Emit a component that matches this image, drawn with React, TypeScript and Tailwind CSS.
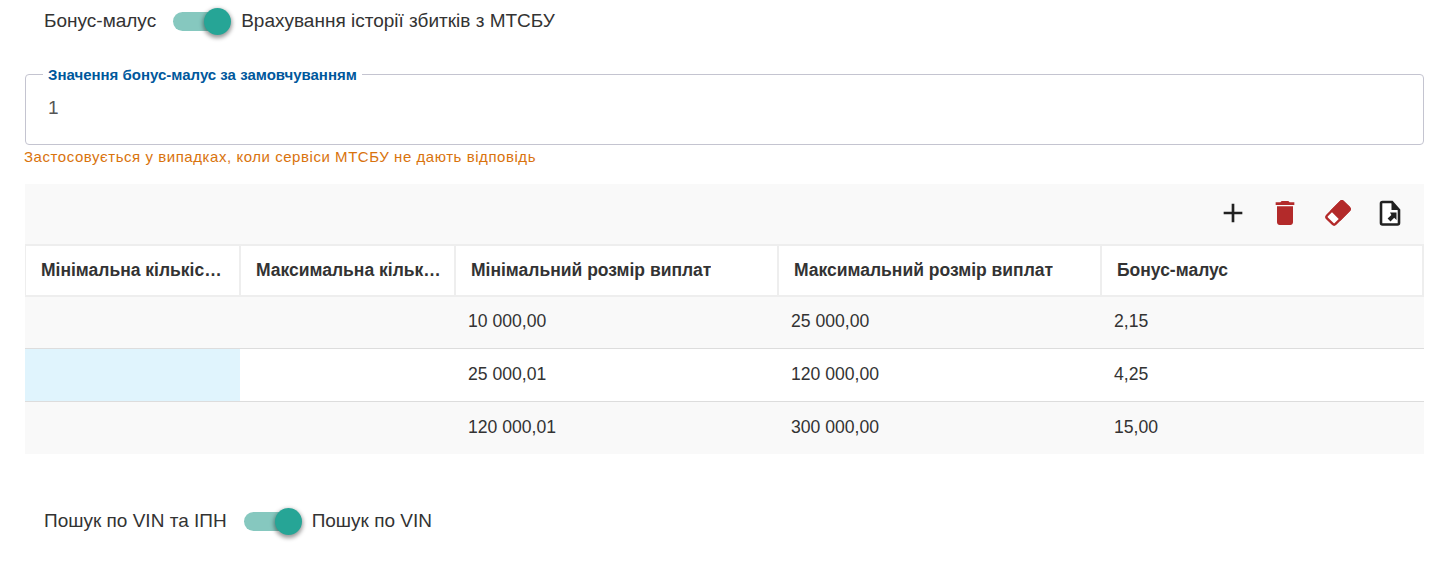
const columns = [
  'Мінімальна кількість страхових випадків',
  'Максимальна кількість страхових випадків',
  'Мінімальний розмір виплат',
  'Максимальний розмір виплат',
  'Бонус-малус',
];

const rows = [
  { min: '10 000,00', max: '25 000,00', bonus: '2,15' },
  { min: '25 000,01', max: '120 000,00', bonus: '4,25' },
  { min: '120 000,01', max: '300 000,00', bonus: '15,00' },
];

const gridCols = 'grid grid-cols-[215px_215px_323px_323px_323px]';

function Toggle() {
  return (
    <span className="relative mr-[10px] ml-[17px] block h-[27px] w-[58px] shrink-0">
      <span className="absolute top-[4px] left-0 h-[19px] w-[46px] rounded-full bg-[#86c8bf]" />
      <span className="absolute top-0 right-0 h-[27px] w-[27px] rounded-full bg-[#26a596] shadow-[0_2px_4px_1px_rgba(0,0,0,0.4)]" />
    </span>
  );
}

function SwitchRow({ left, right, className }: { left: string; right: string; className: string }) {
  return (
    <div className={`flex items-center pl-[19px] text-[19px] leading-none text-[#333] ${className}`}>
      <span className="-mt-[2px]">{left}</span>
      <Toggle />
      <span className="-mt-[2px]">{right}</span>
    </div>
  );
}

export default function App() {
  return (
    <div className="h-[566px] overflow-hidden bg-white pt-[6px] pl-[25px] font-['Liberation_Sans',Arial,sans-serif]">
      <SwitchRow left="Бонус-малус" right="Врахування історії збитків з МТСБУ" className="h-[30px]" />

      {/* default value */}
      <fieldset className="mt-[31px] h-[78px] w-[1399px] rounded border border-[#c4c4d0] pl-[17px]">
        <legend className="px-[5px] text-[15px] leading-[15px] font-bold text-[#00589c]">
          Значення бонус-малус за замовчуванням
        </legend>
        <div className="pt-[16px] pl-[5px] text-[19px] leading-5 text-[#555]">1</div>
      </fieldset>
      <p className="mt-[4px] -ml-px text-[15px] leading-4 tracking-[0.55px] text-[#d9730d]">
        Застосовується у випадках, коли сервіси МТСБУ не дають відповідь
      </p>

      {/* table */}
      <div className="mt-[19px] w-[1399px]">
        <div className="flex h-[60px] items-center justify-end gap-[20px] bg-[#f9f9f9] pr-[19px] pb-[3px]">
          <svg viewBox="0 0 24 24" className="h-8 w-8 fill-[#212121]">
            <path d="M19 13h-6v6h-2v-6H5v-2h6V5h2v6h6v2z" />
          </svg>
          <svg viewBox="0 0 24 24" className="h-8 w-8 fill-[#b32a2a]">
            <path d="M6 19c0 1.1.9 2 2 2h8c1.1 0 2-.9 2-2V7H6v12zM19 4h-3.500l-1-1h-5l-1 1H5v2h14V4z" />
          </svg>
          {/* eraser */}
          <svg viewBox="0 0 32 32" className="h-8 w-8">
            <g transform="rotate(-45 17 16)">
              <rect x="5.500" y="10" width="23" height="12" rx="2" fill="#fff" stroke="#b32a2a" strokeWidth="2.400" />
              <path d="M14.500 10h12a2 2 0 0 1 2 2v8a2 2 0 0 1-2 2h-12z" fill="#b32a2a" stroke="#b32a2a" strokeWidth="2.400" />
            </g>
          </svg>
          {/* export */}
          <svg viewBox="0 0 32 32" className="h-8 w-8">
            <path d="M9.500 5H19l7 8V26a1.500 1.500 0 0 1-1.500 1.500H9.500A1.500 1.500 0 0 1 8 26V6.500A1.500 1.500 0 0 1 9.500 5z" fill="#fff" stroke="#212121" strokeWidth="2.600" />
            <path d="M18.500 5l7.500 8h-7.500z" fill="#212121" />
            <path d="M17 15.500h6.500V23l-2.300-2.300-3.700 3.800-2.900-2.900 3.800-3.700z" fill="#212121" />
          </svg>
        </div>

        <div className="grid h-[53px] grid-cols-[216px_215px_323px_323px_322px] border-y-2 border-[#eee] text-[17.5px] font-bold text-[#333]">
          {columns.map((name, i) => (
            <div
              key={name}
              className={`flex items-center border-r-2 border-[#eee] pr-[12px] pl-[15px] ${i === 0 ? 'border-l' : ''} ${i === 4 ? 'border-r' : ''}`}
            >
              <span className="truncate">{name}</span>
            </div>
          ))}
        </div>

        {rows.map((row, i) => (
          <div
            key={row.min}
            className={`${gridCols} ${i === 1 ? 'h-[53px]' : 'h-[52px]'} pb-[2px] text-[17.6px] text-[#333] ${i % 2 === 0 ? 'bg-[#f9f9f9]' : 'bg-white'} ${i < 2 ? 'border-b border-[#ddd]' : ''}`}
          >
            <div className={i === 1 ? '-mb-[2px] bg-[#e0f4fd]' : ''} />
            <div />
            <div className="flex items-center pl-[13px]">{row.min}</div>
            <div className="flex items-center pl-[13px]">{row.max}</div>
            <div className="flex items-center pl-[13px]">{row.bonus}</div>
          </div>
        ))}
      </div>

      <SwitchRow left="Пошук по VIN та ІПН" right="Пошук по VIN" className="mt-[52px] h-[30px]" />
    </div>
  );
}
